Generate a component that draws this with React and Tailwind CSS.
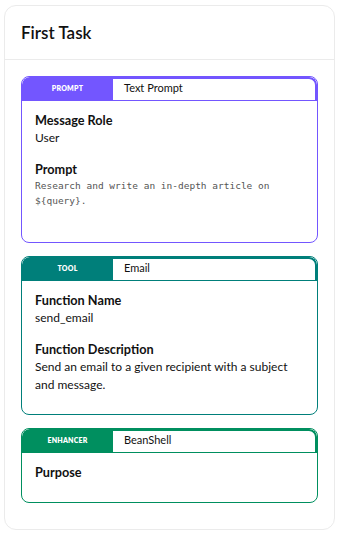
import React from 'react';

const cards = [
  {
    tag: 'PROMPT',
    name: 'Text Prompt',
    border: 'border-[#7356ff]',
    bg: 'bg-[#7356ff]',
    pb: 'pb-[34px]',
    fields: [
      { label: 'Message Role', value: 'User' },
      { label: 'Prompt', value: 'Research and write an in-depth article on ${query}.', mono: true },
    ],
  },
  {
    tag: 'TOOL',
    name: 'Email',
    border: 'border-[#007f7a]',
    bg: 'bg-[#007f7a]',
    pb: 'pb-[20px]',
    fields: [
      { label: 'Function Name', value: 'send_email' },
      { label: 'Function Description', value: 'Send an email to a given recipient with a subject and message.' },
    ],
  },
  {
    tag: 'ENHANCER',
    name: 'BeanShell',
    border: 'border-[#008f5f]',
    bg: 'bg-[#008f5f]',
    pb: 'pb-[21px]',
    fields: [{ label: 'Purpose' }],
  },
];

const NodeCard = ({ card }) => (
  <div className={`rounded-lg border ${card.border} overflow-hidden`}>
    <div className={`flex h-[24px] border-b ${card.border}`}>
      <div className={`w-[91px] ${card.bg} flex items-center justify-center rounded-tl-lg`}>
        <span className="text-[7px] font-extrabold tracking-[0.2px] text-white">{card.tag}</span>
      </div>
      <div className={`flex-1 border-t-2 border-r-2 ${card.border} rounded-tr-lg pl-[11px] text-[11px] leading-[17px] text-[#111]`}>
        {card.name}
      </div>
    </div>
    <div className={`px-[13px] pt-[10px] ${card.pb} flex flex-col gap-[13px]`}>
      {card.fields.map((f) => (
        <div key={f.label}>
          <div className="text-[12.7px] leading-[18px] font-bold text-[#111]">{f.label}</div>
          {f.value &&
            (f.mono ? (
              <div className="font-['DejaVu_Sans_Mono',monospace] text-[9.5px] leading-[15px] text-[#555]">{f.value}</div>
            ) : (
              <div className="text-[12px] leading-[18px] text-[#111]">{f.value}</div>
            ))}
        </div>
      ))}
    </div>
  </div>
);

export default function App() {
  return (
    <div className="w-[339px] h-[538px] bg-white pt-[5px] px-[4px] font-['Lato','Noto_Sans',sans-serif]">
      <div className="h-[525px] rounded-xl border border-[#ebebeb] bg-white">
        <div className="h-[54px] border-b border-[#ebebeb] flex items-center px-[16px]">
          <h1 className="text-[17px] font-semibold text-[#111]">First Task</h1>
        </div>
        <div className="px-[16px] pt-[16px] flex flex-col gap-[13px]">
          {cards.map((c) => (
            <NodeCard key={c.tag} card={c} />
          ))}
        </div>
      </div>
    </div>
  );
}
